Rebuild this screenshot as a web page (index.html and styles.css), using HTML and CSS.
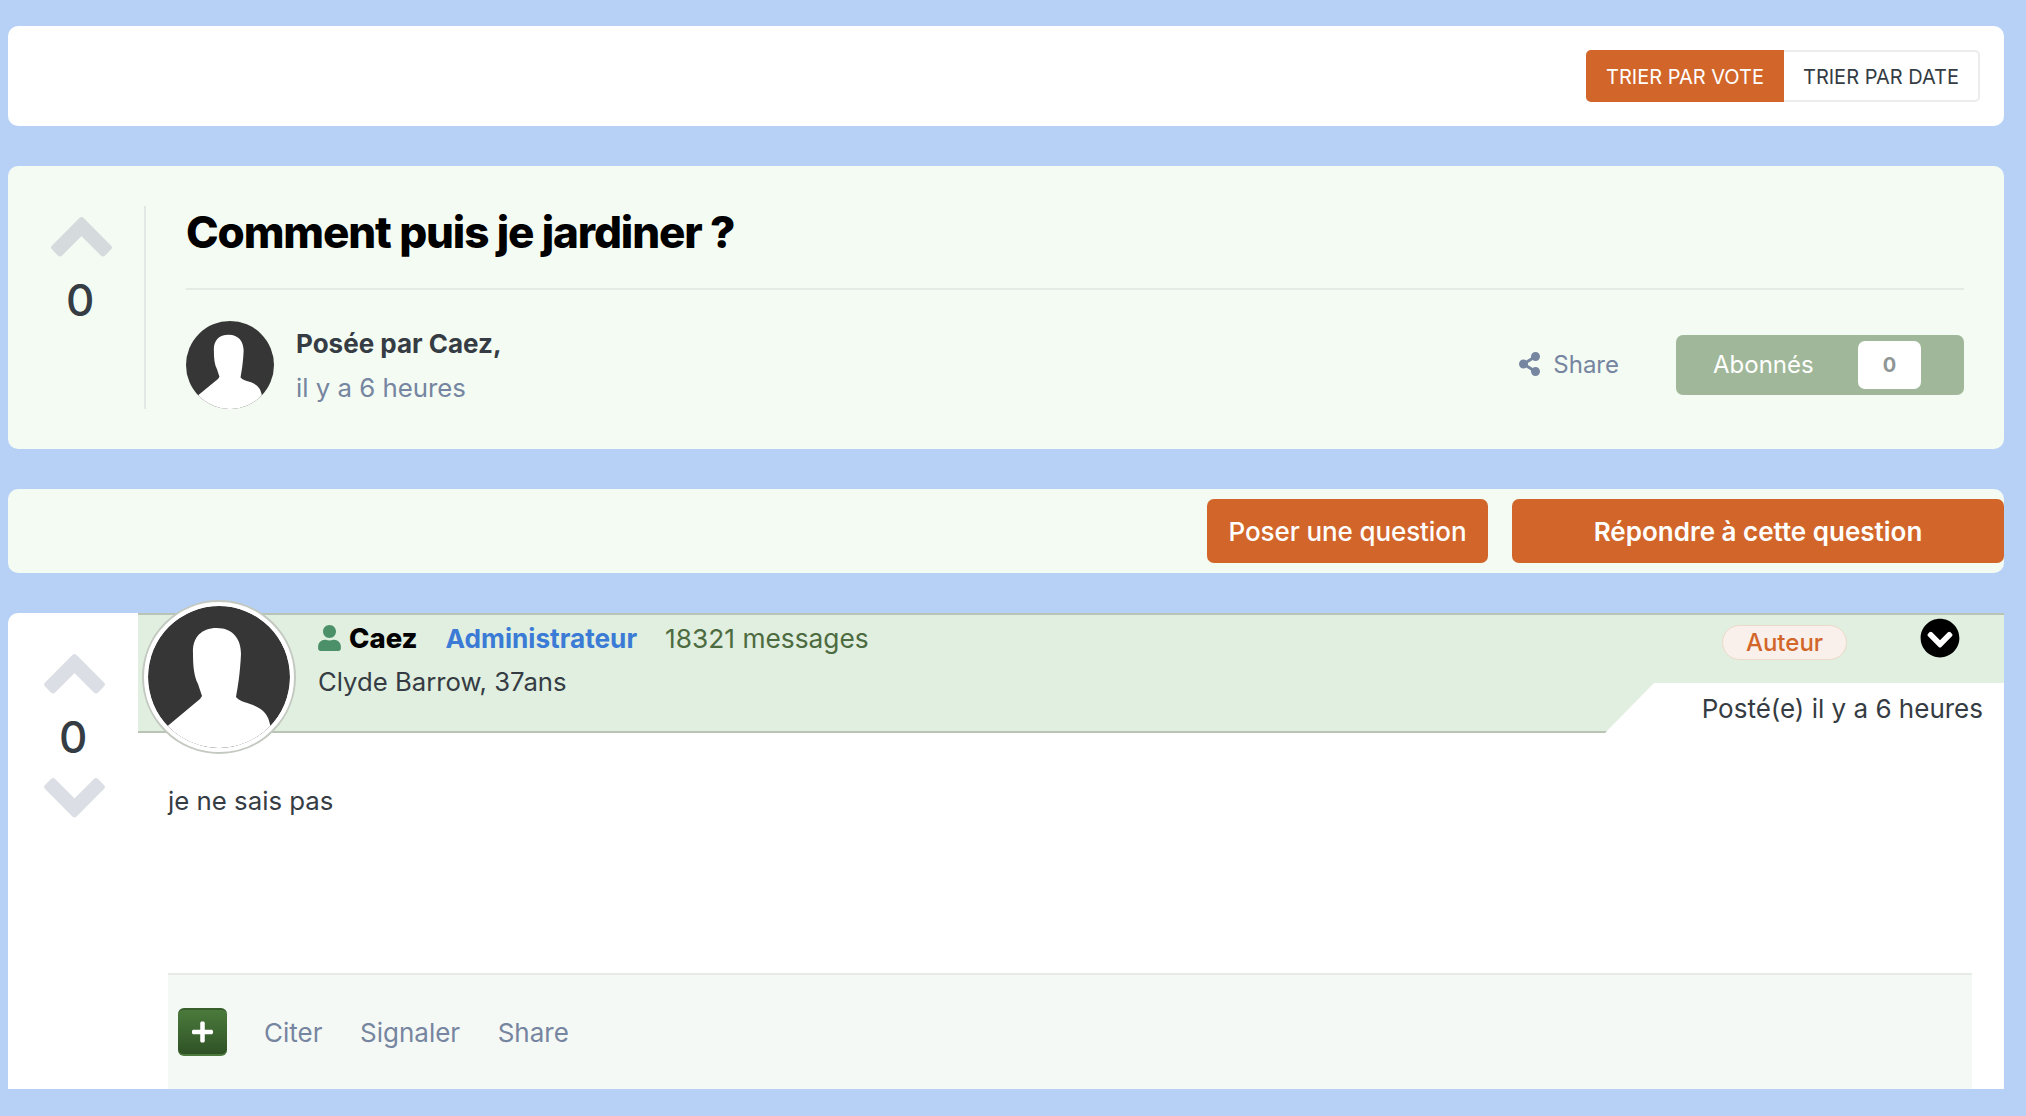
FILE: index.html
```html
<!DOCTYPE html>
<html lang="fr">
<head>
<meta charset="utf-8">
<title>Comment puis je jardiner ?</title>
<link rel="stylesheet" href="styles.css">
</head>
<body>
<svg class="defs" width="0" height="0" aria-hidden="true">
  <symbol id="silhouette" viewBox="0 0 142 142">
    <circle cx="71" cy="71" r="71" fill="#363636"/>
    <path fill="#fff" d="M68.7 22C52 22 44 33 45 48C45 60 46 70 50 78L54 90L52 93L19.6 120A71 71 0 0 0 122.4 120C120 108 116 104 105 99C97 96 91 95 88 91C90 80 92 68 93 48C93 33 85 22 68.7 22Z"/>
  </symbol>
  <symbol id="up" viewBox="0 0 63 41.5"><path fill="currentColor" stroke="currentColor" stroke-width="6" stroke-linejoin="round" d="M31.5 4.2L58.8 31.5L53 37.3L31.5 15.8L10 37.3L4.2 31.5Z"/></symbol>
  <symbol id="down" viewBox="0 0 63 41.5"><path fill="currentColor" stroke="currentColor" stroke-width="6" stroke-linejoin="round" d="M31.5 37.3L58.8 10L53 4.2L31.5 25.7L10 4.2L4.2 10Z"/></symbol>
</svg>

<main class="page">
  <section class="card sort-card">
    <div class="sort-group">
      <a class="sort-btn sort-active">TRIER PAR VOTE</a>
      <a class="sort-btn">TRIER PAR DATE</a>
    </div>
  </section>

  <section class="card topic-card">
    <div class="topic-vote">
      <svg class="chev chev-topic"><use href="#up"/></svg>
      <div class="vote-count">0</div>
    </div>
    <div class="topic-main">
      <h1 class="topic-title">Comment puis je jardiner ?</h1>
      <div class="topic-meta">
        <svg class="avatar-small"><use href="#silhouette"/></svg>
        <div class="topic-author">
          <div class="author-strong">Posée par Caez,</div>
          <div class="author-time">il y a 6 heures</div>
        </div>
        <a class="share-link">
          <svg class="share-icon" viewBox="0 0 448 512"><path d="M352 320c-22.608 0-43.387 7.819-59.79 20.895l-102.486-64.054a96.551 96.551 0 0 0 0-41.683l102.486-64.054C308.613 184.181 329.392 192 352 192c53.019 0 96-42.981 96-96S405.019 0 352 0s-96 42.981-96 96c0 7.158.79 14.13 2.276 20.841L155.79 180.895C139.387 167.819 118.608 160 96 160c-53.019 0-96 42.981-96 96s42.981 96 96 96c22.608 0 43.387-7.819 59.79-20.895l102.486 64.054A96.301 96.301 0 0 0 256 416c0 53.019 42.981 96 96 96s96-42.981 96-96-42.981-96-96-96z"/></svg>
          Share
        </a>
        <div class="follow-btn">
          <span>Abonnés</span>
          <span class="follow-count">0</span>
        </div>
      </div>
    </div>
  </section>

  <section class="card action-card">
    <a class="action-btn action-ask">Poser une question</a>
    <a class="action-btn action-reply">Répondre à cette question</a>
  </section>

  <section class="card post-card">
    <div class="post-vote">
      <svg class="chev chev-post"><use href="#up"/></svg>
      <div class="vote-count">0</div>
      <svg class="chev chev-post"><use href="#down"/></svg>
    </div>
    <div class="post-main">
      <header class="post-head">
        <svg class="avatar-large"><use href="#silhouette"/></svg>
        <div class="post-author">
          <div class="author-line">
            <svg class="user-icon" viewBox="0 0 448 512"><path d="M224 256c70.7 0 128-57.3 128-128S294.7 0 224 0 96 57.3 96 128s57.3 128 128 128zm89.6 32h-16.7c-22.2 10.2-46.9 16-72.9 16s-50.6-5.8-72.9-16h-16.7C60.2 288 0 348.2 0 422.4V464c0 26.5 21.5 48 48 48h352c26.5 0 48-21.5 48-48v-41.6c0-74.2-60.2-134.4-134.4-134.4z"/></svg>
            <strong class="author-name">Caez</strong>
            <span class="author-role">Administrateur</span>
            <span class="author-count">18321 messages</span>
          </div>
          <div class="author-real">Clyde Barrow, 37ans</div>
        </div>
        <div class="post-side">
          <div class="post-tools">
            <span class="pill">Auteur</span>
            <svg class="circle-down" viewBox="0 0 512 512"><circle cx="256" cy="256" r="180" fill="#fff"/><path d="M504 256c0 137-111 248-248 248S8 393 8 256 119 8 256 8s248 111 248 248zM273 369.9l135.5-135.5c9.4-9.4 9.4-24.6 0-33.9l-17-17c-9.4-9.4-24.6-9.4-33.9 0L256 285.1 154.4 183.5c-9.4-9.4-24.6-9.4-33.9 0l-17 17c-9.4 9.4-9.4 24.6 0 33.9L239 369.9c9.4 9.4 24.6 9.4 34 0z"/></svg>
          </div>
          <div class="post-date">Posté(e) il y a 6 heures</div>
        </div>
      </header>
      <div class="post-body">
        <p class="post-text">je ne sais pas</p>
        <footer class="post-foot">
          <a class="plus-btn"><svg class="plus-icon" viewBox="0 0 448 512"><path d="M416 208H272V64c0-17.67-14.33-32-32-32h-32c-17.67 0-32 14.33-32 32v144H32c-17.67 0-32 14.33-32 32v32c0 17.67 14.33 32 32 32h144v144c0 17.67 14.33 32 32 32h32c17.67 0 32-14.33 32-32V304h144c17.67 0 32-14.33 32-32v-32c0-17.67-14.33-32-32-32z"/></svg></a>
          <a class="foot-link">Citer</a>
          <a class="foot-link">Signaler</a>
          <a class="foot-link">Share</a>
        </footer>
      </div>
    </div>
  </section>
</main>
</body>
</html>
```

FILE: styles.css
```css
* { box-sizing: border-box; }
html, body { margin: 0; height: 100%; }
body {
  background: #b7d1f6;
  font-family: Inter, "Liberation Sans", sans-serif;
  color: #353c43;
  overflow: hidden;
}
.defs { position: absolute; }
.page {
  display: flex;
  flex-direction: column;
  gap: 40px;
  padding: 26px 22px 0 8px;
}
.card { border-radius: 10px; background: #fff; }

/* sort */
.sort-card {
  height: 100px;
  display: flex;
  justify-content: flex-end;
  align-items: center;
  padding-right: 24px;
}
.sort-group { display: flex; height: 52px; }
.sort-btn {
  display: flex;
  align-items: center;
  justify-content: center;
  font-size: 20px;
  padding-top: 2px;
  width: 196px;
  border: 2px solid #ececec;
  border-left: 0;
  border-radius: 0 5px 5px 0;
  color: #353c43;
}
.sort-active {
  width: 198px;
  background: #d2662a;
  border: 0;
  border-radius: 5px 0 0 5px;
  color: #fff;
}

/* topic */
.topic-card {
  display: flex;
  height: 283px;
  padding: 40px 40px 40px 0;
  background: #f3fbf3;
}
.topic-vote {
  width: 138px;
  flex: none;
  padding: 10px 0 0 42px;
  border-right: 2px solid #e2e8e4;
  color: #d5dadd;
}
.chev { display: block; }
.chev-topic { width: 63px; height: 41.5px; }
.vote-count {
  font-size: 44px;
  line-height: 52px;
  font-weight: 500;
  color: #353c43;
}
.topic-vote .vote-count { margin: 16.5px 0 0 16px; }
.topic-main { flex: 1; padding-left: 40px; }
.topic-title {
  margin: 0;
  height: 84px;
  font-size: 44px;
  line-height: 52px;
  font-weight: 800;
  letter-spacing: -1.15px;
  color: #000;
  border-bottom: 2px solid #e4ebe5;
}
.topic-meta {
  display: flex;
  align-items: center;
  margin-top: 30px;
}
.avatar-small { width: 88px; height: 88px; flex: none; }
.topic-author { margin-left: 22px; flex: 1; margin-top: 2px; }
.author-strong { font-size: 26px; line-height: 44px; font-weight: 700; color: #353c43; }
.author-time { font-size: 25.8px; line-height: 44px; color: #7685a0; }
.share-link {
  display: flex;
  align-items: center;
  gap: 13px;
  font-size: 24px;
  color: #7685a0;
  margin: 0 57px 2px 0;
}
.share-icon { width: 21px; height: 24px; fill: #7685a0; }
.follow-btn {
  display: flex;
  align-items: center;
  justify-content: space-between;
  width: 288px;
  height: 60px;
  padding: 0 43px 2px 37px;
  background: #a0b899;
  border-radius: 7px;
  color: #fff;
  font-size: 24px;
}
.follow-count {
  display: flex;
  align-items: center;
  justify-content: center;
  width: 63px;
  height: 48px;
  margin-top: 2px;
  background: #fff;
  border-radius: 7px;
  font-size: 20px;
  font-weight: 700;
  color: #8f9695;
}

/* actions */
.action-card {
  display: flex;
  justify-content: flex-end;
  gap: 24px;
  height: 84px;
  padding-top: 10px;
  background: #f3fbf3;
}
.action-btn {
  display: flex;
  align-items: center;
  justify-content: center;
  height: 64px;
  background: #d2662a;
  border-radius: 7px;
  color: #fff;
  font-size: 26px;
  font-weight: 500;
  letter-spacing: -0.1px;
}
.action-ask { width: 281px; }
.action-reply { width: 492px; font-weight: 600; letter-spacing: 0; }

/* post */
.post-card { display: flex; height: 476px; border-radius: 10px 0 0 0; }
.post-vote {
  width: 130px;
  flex: none;
  padding: 40px 0 0 35px;
  color: #dbdee4;
}
.chev-post { width: 63px; height: 41.5px; }
.post-vote .vote-count { margin: 16.5px 0 14px 16px; }
.post-main { flex: 1; display: flex; flex-direction: column; min-width: 0; }
.post-head {
  position: relative;
  display: flex;
  justify-content: space-between;
  height: 120px;
  padding-left: 180px;
}
.post-head::before {
  content: "";
  position: absolute;
  inset: 0;
  background: #e0efdf;
  border-top: 2px solid #b9c4b5;
  border-bottom: 2px solid #b9c4b5;
  clip-path: polygon(0 0, 100% 0, 100% 70px, 1516px 70px, 1467px 120px, 0 120px);
}
.avatar-large {
  position: absolute;
  left: 4px;
  top: -13px;
  width: 154px;
  height: 154px;
  border-radius: 50%;
  padding: 4px;
  background: #fff;
  border: 2px solid #c3c9c0;
}
.post-author, .post-side { position: relative; }
.post-author { padding-top: 3px; }
.author-line { display: flex; align-items: center; height: 44px; font-size: 26px; }
.user-icon { width: 23px; height: 26px; fill: #4c9069; margin-right: 8px; }
.author-name { font-size: 27.5px; font-weight: 800; color: #000; margin-right: 28px; }
.author-role { font-size: 26.2px; font-weight: 700; color: #3b7bd6; margin-right: 28px; }
.author-count { font-size: 26.3px; color: #4d6b40; }
.author-real { font-size: 25.7px; line-height: 44px; color: #353c43; }
.post-side { display: flex; flex-direction: column; align-items: flex-end; padding-right: 21px; }
.post-tools { display: flex; align-items: flex-start; margin-right: 23px; padding-top: 5px; }
.pill {
  display: flex;
  align-items: center;
  justify-content: center;
  width: 125px;
  height: 35px;
  margin: 7px 73px 0 0;
  background: #f9f0eb;
  border: 1px solid #ecd9c9;
  border-radius: 18px;
  font-size: 24px;
  font-weight: 500;
  color: #d2662a;
}
.circle-down { width: 40px; height: 40px; fill: #000; }
.post-date { font-size: 26px; line-height: 44px; margin-top: 27px; color: #353c43; }
.post-body {
  flex: 1;
  display: flex;
  flex-direction: column;
  justify-content: space-between;
  padding: 0 32px 0 30px;
}
.post-text { margin: 50px 0 0; font-size: 25.8px; line-height: 36px; color: #353c43; }
.post-foot {
  display: flex;
  align-items: center;
  height: 116px;
  padding-left: 10px;
  background: #f5f9f5;
  border-top: 2px solid #e6ebe6;
  font-size: 26px;
  color: #7685a0;
}
.plus-btn {
  display: flex;
  align-items: center;
  justify-content: center;
  width: 49px;
  height: 48px;
  margin-right: 37px;
  border-radius: 6px;
  background: linear-gradient(#4b7a3c, #2f5226);
  border-top: 2px solid #375f2c;
  border-bottom: 2px solid #4b7a3c;
}
.plus-icon { width: 21px; height: 24px; fill: #fff; }
.foot-link { margin-right: 37.5px; }
```
